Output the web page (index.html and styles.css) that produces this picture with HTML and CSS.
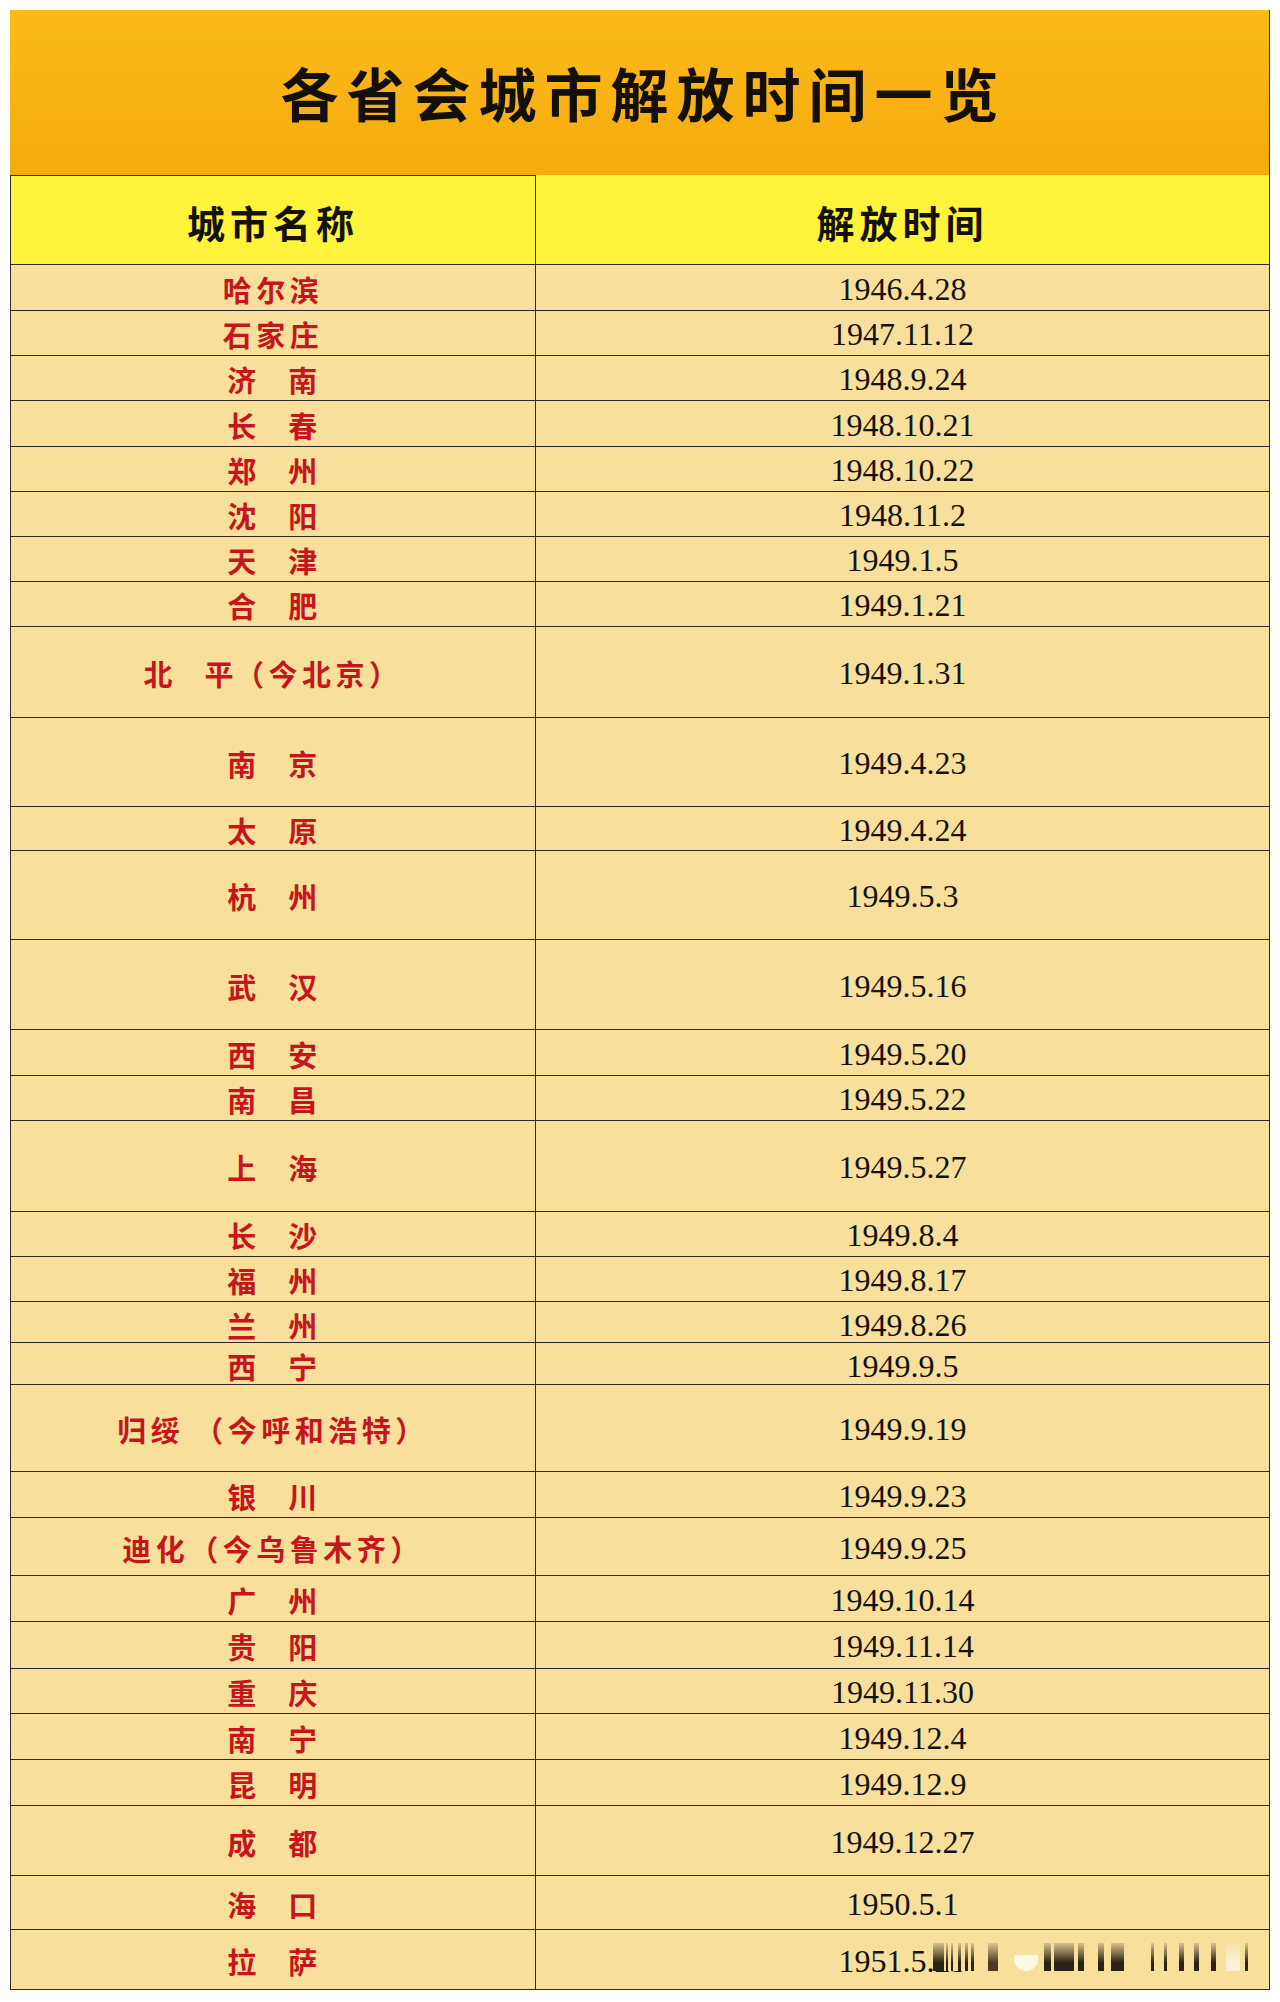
FILE: index.html
```html
<!DOCTYPE html>
<html lang="zh-CN">
<head>
<meta charset="utf-8">
<title>各省会城市解放时间一览</title>
<link rel="stylesheet" href="styles.css">
</head>
<body>
<div class="sheet">
  <div class="title">各省会城市解放时间一览</div>
  <div class="table">
    <div class="row head"><div class="cell hname">城市名称</div><div class="cell hdate">解放时间</div></div>
    <div class="row h46"><div class="cell city wide">哈尔滨</div><div class="cell date">1946.4.28</div></div>
    <div class="row h45"><div class="cell city wide">石家庄</div><div class="cell date">1947.11.12</div></div>
    <div class="row h45"><div class="cell city pair">济　南</div><div class="cell date">1948.9.24</div></div>
    <div class="row h46"><div class="cell city pair">长　春</div><div class="cell date">1948.10.21</div></div>
    <div class="row h45"><div class="cell city pair">郑　州</div><div class="cell date">1948.10.22</div></div>
    <div class="row h45"><div class="cell city pair">沈　阳</div><div class="cell date">1948.11.2</div></div>
    <div class="row h45"><div class="cell city pair">天　津</div><div class="cell date">1949.1.5</div></div>
    <div class="row h45"><div class="cell city pair">合　肥</div><div class="cell date">1949.1.21</div></div>
    <div class="row h91"><div class="cell city"><span class="pair">北　平</span><span class="wide">（今北京）</span></div><div class="cell date">1949.1.31</div></div>
    <div class="row h89"><div class="cell city pair">南　京</div><div class="cell date">1949.4.23</div></div>
    <div class="row h44"><div class="cell city pair">太　原</div><div class="cell date">1949.4.24</div></div>
    <div class="row h89"><div class="cell city pair">杭　州</div><div class="cell date">1949.5.3</div></div>
    <div class="row h90"><div class="cell city pair">武　汉</div><div class="cell date">1949.5.16</div></div>
    <div class="row h46"><div class="cell city pair">西　安</div><div class="cell date">1949.5.20</div></div>
    <div class="row h45"><div class="cell city pair">南　昌</div><div class="cell date">1949.5.22</div></div>
    <div class="row h91"><div class="cell city pair">上　海</div><div class="cell date">1949.5.27</div></div>
    <div class="row h45"><div class="cell city pair">长　沙</div><div class="cell date">1949.8.4</div></div>
    <div class="row h45"><div class="cell city pair">福　州</div><div class="cell date">1949.8.17</div></div>
    <div class="row h41"><div class="cell city pair">兰　州</div><div class="cell date">1949.8.26</div></div>
    <div class="row h42"><div class="cell city pair">西　宁</div><div class="cell date">1949.9.5</div></div>
    <div class="row h87"><div class="cell city wide">归绥<span class="gap"></span>（今呼和浩特）</div><div class="cell date">1949.9.19</div></div>
    <div class="row h46"><div class="cell city pair">银　川</div><div class="cell date">1949.9.23</div></div>
    <div class="row h58"><div class="cell city wide">迪化（今乌鲁木齐）</div><div class="cell date">1949.9.25</div></div>
    <div class="row h46"><div class="cell city pair">广　州</div><div class="cell date">1949.10.14</div></div>
    <div class="row h47"><div class="cell city pair">贵　阳</div><div class="cell date">1949.11.14</div></div>
    <div class="row h45"><div class="cell city pair">重　庆</div><div class="cell date">1949.11.30</div></div>
    <div class="row h46"><div class="cell city pair">南　宁</div><div class="cell date">1949.12.4</div></div>
    <div class="row h46"><div class="cell city pair">昆　明</div><div class="cell date">1949.12.9</div></div>
    <div class="row h70"><div class="cell city pair">成　都</div><div class="cell date">1949.12.27</div></div>
    <div class="row h54"><div class="cell city pair">海　口</div><div class="cell date">1950.5.1</div></div>
    <div class="row h60"><div class="cell city pair">拉　萨</div><div class="cell date last">1951.5.23<span class="watermark" aria-hidden="true"></span></div></div>
  </div>
</div>
</body>
</html>
```

FILE: styles.css
```css
html, body {
  margin: 0;
  padding: 0;
  background: #ffffff;
}

.sheet {
  margin: 10px;
  width: 1260px;
}

.title {
  box-sizing: border-box;
  height: 165px;
  display: flex;
  align-items: center;
  justify-content: center;
  padding-top: 0;
  padding-bottom: 2px;
  padding-left: 8px;
  background: linear-gradient(180deg, #fcba1b 0%, #f9b213 55%, #f7ab0c 100%);
  border-right: 1px solid #3a2e18;
  font-family: "Noto Sans CJK SC", sans-serif;
  font-weight: 700;
  font-size: 58px;
  letter-spacing: 8px;
  color: #121008;
}

.table {
  border-left: 1px solid #2b2a26;
  border-right: 1px solid #2b2a26;
  background: #f9df9c;
}

.row {
  box-sizing: border-box;
  display: grid;
  grid-template-columns: 525px 1fr;
  height: 45px;
  border-bottom: 1px solid #2b2a26;
}

.cell {
  display: flex;
  align-items: center;
  justify-content: center;
  white-space: nowrap;
}

.cell:first-child {
  box-sizing: border-box;
  border-right: 1px solid #2b2a26;
}

.head {
  height: 90px;
  background: #fff33c;
}

.hname,
.hdate {
  padding-top: 3px;
  font-family: "Noto Sans CJK SC", sans-serif;
  font-weight: 700;
  font-size: 38px;
  letter-spacing: 5px;
  color: #141208;
}

.hname {
  border-top: 1px solid #2b2a26;
}

.city {
  padding-top: 2px;
  font-family: "Noto Sans CJK SC", sans-serif;
  font-weight: 700;
  font-size: 29px;
  color: #c4161c;
}

.pair {
  letter-spacing: 1.5px;
}

.wide {
  letter-spacing: 4.5px;
}

.gap {
  display: inline-block;
  width: 10px;
}

.date {
  position: relative;
  padding-top: 3px;
  font-family: "Liberation Serif", "Times New Roman", serif;
  font-size: 32px;
  color: #141210;
}

.h41 { height: 41px; }
.h42 { height: 42px; }
.h44 { height: 44px; }
.h45 { height: 45px; }
.h46 { height: 46px; }
.h47 { height: 47px; }
.h54 { height: 54px; }
.h58 { height: 58px; }
.h60 { height: 60px; }
.h70 { height: 70px; }
.h87 { height: 87px; }
.h89 { height: 89px; }
.h90 { height: 90px; }
.h91 { height: 91px; }

/* smeared watermark lying over the last date */
.watermark {
  position: absolute;
  left: 397px;
  top: 13px;
  width: 315px;
  height: 28px;
  background:
    linear-gradient(180deg, rgba(249, 223, 156, 0.85) 0%, rgba(249, 223, 156, 0) 70%),
    linear-gradient(90deg,
      #2b2114 0 11px, transparent 11px 13px,
      #2b2114 13px 15px, transparent 15px 18px,
      #2b2114 18px 20px, transparent 20px 25px,
      #2b2114 25px 28px, transparent 28px 32px,
      #2b2114 32px 35px, transparent 35px 38px,
      #2b2114 38px 41px, transparent 41px 55px,
      #4a3a22 55px 65px, transparent 65px 111px,
      #2b2114 111px 118px, transparent 118px 121px,
      #2b2114 121px 141px, transparent 141px 145px,
      #2b2114 145px 151px, transparent 151px 165px,
      #2b2114 165px 171px, transparent 171px 178px,
      #2b2114 178px 191px, transparent 191px 218px,
      #2b2114 218px 221px, transparent 221px 231px,
      #2b2114 231px 234px, transparent 234px 246px,
      #2b2114 246px 251px, transparent 251px 261px,
      #2b2114 261px 266px, transparent 266px 278px,
      #2b2114 278px 283px, transparent 283px 293px,
      #fbf1d6 293px 307px, transparent 307px 312px,
      #2b2114 312px 315px),
    #f9df9c;
}

.watermark::after {
  content: "";
  position: absolute;
  left: 81px;
  top: 12px;
  width: 24px;
  height: 16px;
  border-radius: 0 0 12px 12px;
  background: #fff9e6;
}
```
